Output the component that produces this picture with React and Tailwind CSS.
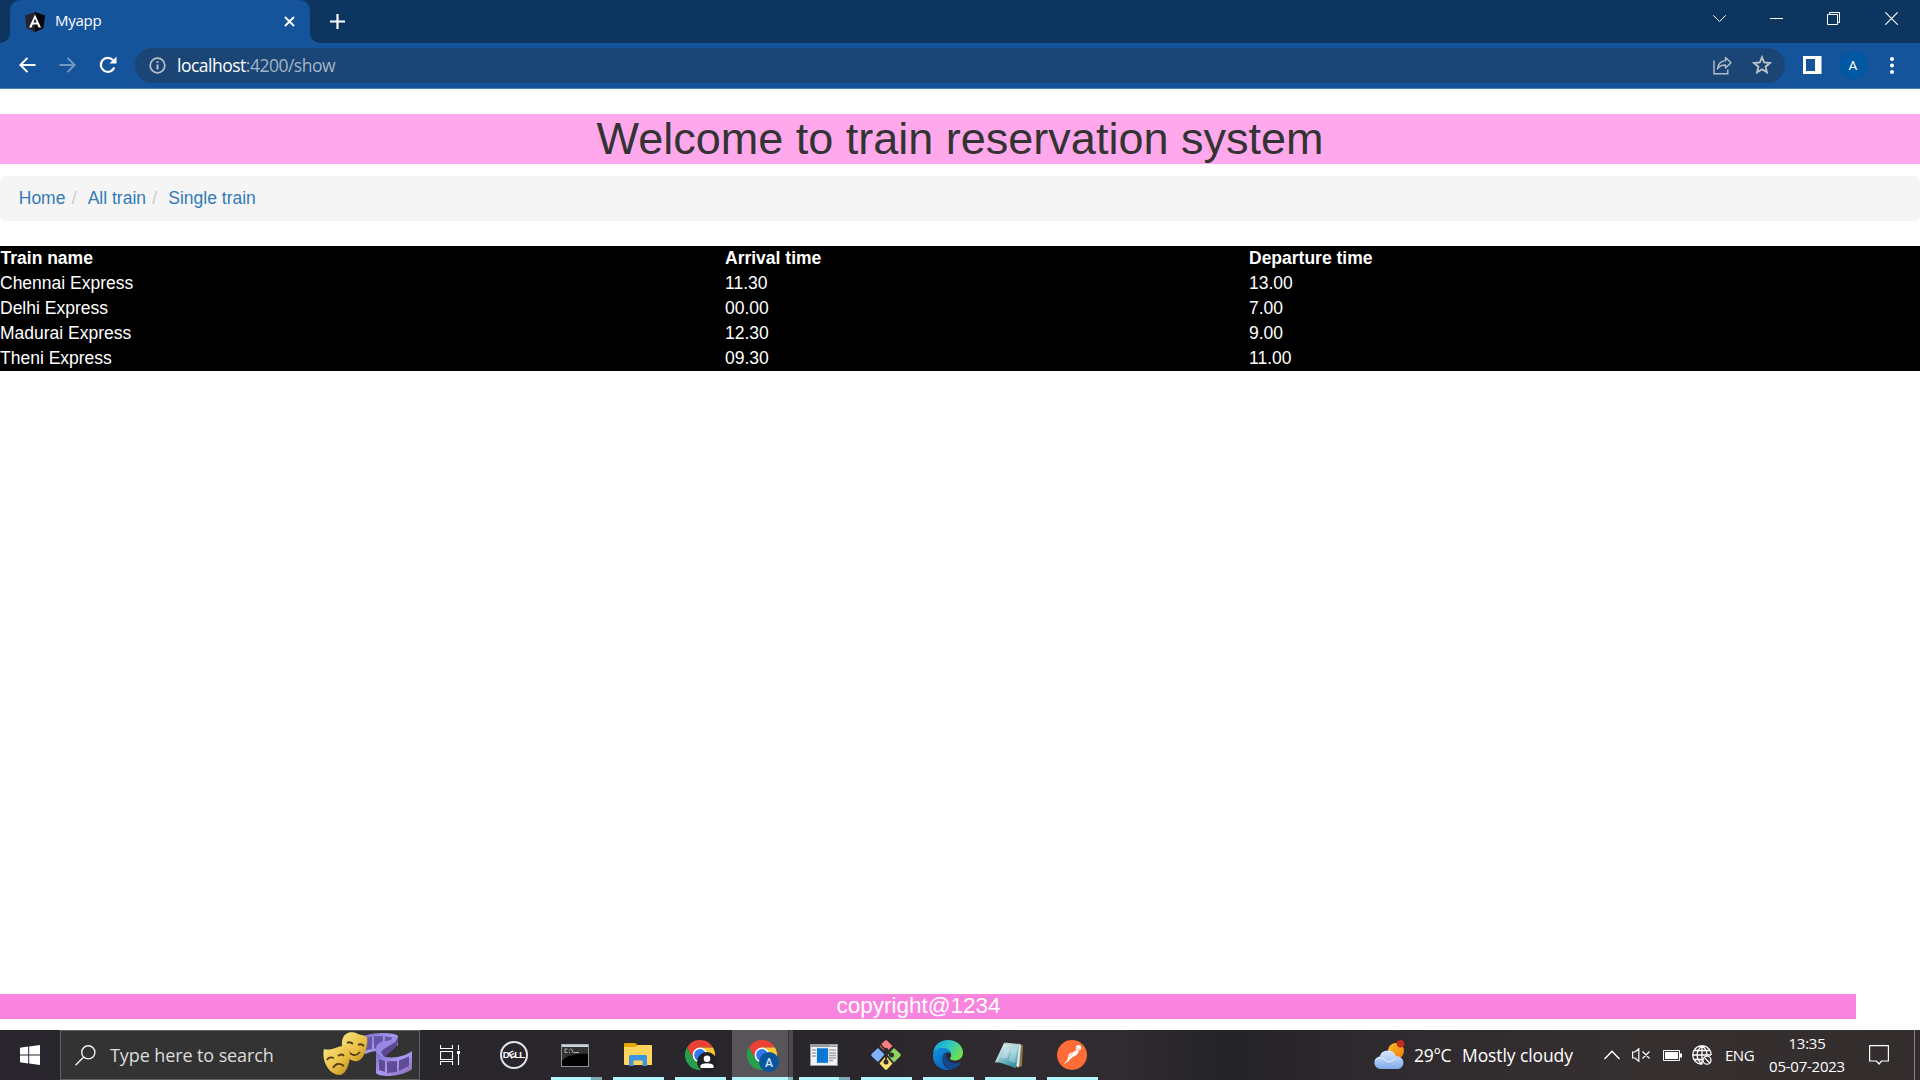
import React from "react";

const UI = "font-['Open_Sans','Noto_Sans',sans-serif]";

/* ---------- Browser icons ---------- */

const Angular = () => (
  <svg width="20" height="20" viewBox="0 0 20 20">
    <path d="M10 0 20 3.400 18.500 16 10 20 1.500 16 0 3.400Z" fill="#23252e" />
    <path d="M10 0 20 3.400 18.500 16 10 20Z" fill="#05070f" />
    <path
      d="M10 2.500 4 15.500H6.500L7.700 12.600H12.300L13.500 15.500H16ZM10 6.800 11.600 10.600H8.400Z"
      fill="#fff"
      fillRule="evenodd"
    />
  </svg>
);

const Reload = () => (
  <svg width="18" height="18" viewBox="0 0 18 18">
    <path d="M15.300 11.500A7 7 0 1 1 13.900 4" fill="none" stroke="#fff" strokeWidth="2.200" />
    <path d="M17.500 0.500V7.500H10.500Z" fill="#fff" />
  </svg>
);

const Share = () => (
  <svg width="19" height="19" viewBox="0 0 19 19" fill="none" stroke="#b5bfca" strokeWidth="1.400">
    <path d="M1 4.500V17.800H14.800V13.500" />
    <path d="M12.500 1.500 18 6.800 12.500 12V9C8.500 9 6 10.300 4.500 12.800 5 8.500 7.500 5 12.500 4.600Z" strokeLinejoin="round" />
  </svg>
);

const Star = () => (
  <svg width="20" height="20" viewBox="0 0 20 20">
    <path
      d="M10 2.200 12.200 7.500 17.900 8 13.600 11.700 14.900 17.300 10 14.300 5.100 17.300 6.400 11.700 2.100 8 7.800 7.500Z"
      fill="none"
      stroke="#c3c5c7"
      strokeWidth="1.800"
    />
  </svg>
);

function TabStrip() {
  return (
    <div className="flex h-[43px] bg-[#0c3560]">
      <div className="flex w-[10px] items-end">
        <svg width="10" height="10" viewBox="0 0 10 10">
          <path d="M10 0V10H0A10 10 0 0 0 10 0Z" fill="#15539a" />
        </svg>
      </div>
      <div className="flex h-[43px] w-[300px] items-center rounded-t-[10px] bg-[#15539a] pl-[15px] pr-[15px]">
        <Angular />
        <span className="mb-[3px] ml-[10px] flex-1 text-[15px] leading-[20px] tracking-[-0.25px] text-white">Myapp</span>
        <svg width="11" height="11" viewBox="0 0 11 11">
          <path d="M1 1 10 10M10 1 1 10" stroke="#fff" strokeWidth="1.900" />
        </svg>
      </div>
      <div className="flex w-[10px] items-end">
        <svg width="10" height="10" viewBox="0 0 10 10">
          <path d="M0 0V10H10A10 10 0 0 1 0 0Z" fill="#15539a" />
        </svg>
      </div>
      <svg width="15" height="15" viewBox="0 0 15 15" className="ml-[10px] mt-[14px]">
        <path d="M7.500 0V15M0 7.500H15" stroke="#fff" strokeWidth="2.200" />
      </svg>
      <div className="ml-auto flex pt-[12px]">
        <svg width="13" height="13" viewBox="0 0 13 13" fill="none" stroke="#fff" className="mr-[44px]">
          <path d="M0.300 3.300 6.500 9.500 12.700 3.300" />
        </svg>
        <svg width="13" height="13" viewBox="0 0 13 13" fill="none" stroke="#fff" className="mr-[44px]">
          <path d="M0 6.500H13" />
        </svg>
        <svg width="13" height="13" viewBox="0 0 13 13" fill="none" stroke="#fff" className="mr-[45px]">
          <path d="M0.500 2.500H10.500V12.500H0.500ZM2.500 2.500V0.500H12.500V10.500H10.500" />
        </svg>
        <svg width="13" height="13" viewBox="0 0 13 13" fill="none" stroke="#fff" className="mr-[22px]">
          <path d="M0.300 0.300 12.700 12.700M12.700 0.300 0.300 12.700" strokeWidth="1.100" />
        </svg>
      </div>
    </div>
  );
}

function Toolbar() {
  return (
    <div className="flex h-[46px] items-center border-b border-[#4a7eb9] bg-[#15539a] pb-[1px] pl-[19px]">
      <svg width="17" height="16" viewBox="0 0 17 16" fill="none" stroke="#fff" strokeWidth="2">
        <path d="M16.500 8H1.600M8.500 0.900 1.400 8 8.500 15.100" />
      </svg>
      <svg width="17" height="16" viewBox="0 0 17 16" fill="none" stroke="#7299c4" strokeWidth="2" className="ml-[23px]">
        <path d="M0.500 8H15.400M8.500 0.900 15.600 8 8.500 15.100" />
      </svg>
      <div className="ml-[23px]">
        <Reload />
      </div>
      <div className="ml-[18px] flex h-[35px] w-[1650px] items-center rounded-full bg-[#1a4575] pl-[14px] pr-[13px]">
        <svg width="17" height="17" viewBox="0 0 17 17" fill="none" stroke="#b9bfc6" strokeWidth="1.700">
          <circle cx="8.500" cy="8.500" r="7.300" />
          <path d="M8.500 7.500V12.500M8.500 4.300V6" strokeWidth="2" />
        </svg>
        <span className="ml-[11px] mb-[1px] flex-1 whitespace-nowrap text-[17.5px] leading-[24px] tracking-[-0.5px] text-white">
          localhost<span className="text-[#a3b5c8]">:4200/show</span>
        </span>
        <Share />
        <span className="ml-[20px]">
          <Star />
        </span>
      </div>
      <svg width="19" height="18" viewBox="0 0 19 18" className="ml-[18px]">
        <path d="M0 0H18.500V18H0ZM3 3V15H12V3Z" fill="#fff" fillRule="evenodd" />
      </svg>
      <div className="ml-[17px] flex h-[28px] w-[28px] items-center justify-center rounded-full bg-[#0058a3] font-['Roboto',sans-serif] text-[13.5px] text-white">
        A
      </div>
      <svg width="4" height="17" viewBox="0 0 4 17" className="ml-[23px]" fill="#fff">
        <circle cx="2" cy="2" r="2" />
        <circle cx="2" cy="8.500" r="2" />
        <circle cx="2" cy="15" r="2" />
      </svg>
    </div>
  );
}

/* ---------- Page ---------- */

const trains = [
  ["Chennai Express", "11.30", "13.00"],
  ["Delhi Express", "00.00", "7.00"],
  ["Madurai Express", "12.30", "9.00"],
  ["Theni Express", "09.30", "11.00"],
];

function Page() {
  return (
    <main className="flex flex-1 flex-col bg-white pt-[25px] font-['Liberation_Sans',Arial,sans-serif] text-[17.5px] leading-[25px]">
      <h1 className="h-[50px] bg-[#ffa8ec] text-center text-[45px] leading-[50px] text-[#333]">
        Welcome to train reservation system
      </h1>
      <ol className="mt-[12px] flex h-[45px] rounded-[5px] bg-[#f5f5f5] px-[18.75px] pt-[10px] text-[#337ab7]">
        <li>Home</li>
        <li>
          <span className="px-[6.25px] text-[#ccc]">/&nbsp;</span>All train
        </li>
        <li>
          <span className="px-[6.25px] text-[#ccc]">/&nbsp;</span>Single train
        </li>
      </ol>
      <table className="mt-[25px] w-full table-fixed border-collapse bg-black text-left text-white">
        <thead>
          <tr>
            <th className="w-[725px] p-0 pl-[0.5px]">Train name</th>
            <th className="w-[524px] p-0">Arrival time</th>
            <th className="p-0">Departure time</th>
          </tr>
        </thead>
        <tbody>
          {trains.map((row) => (
            <tr key={row[0]}>
              {row.map((cell) => (
                <td key={cell} className="p-0">
                  {cell}
                </td>
              ))}
            </tr>
          ))}
        </tbody>
      </table>
      <footer className="mb-[11px] mt-auto h-[25px] w-[1856px] bg-[#f984df] pr-[19px] text-center text-[22.5px] leading-[23px] text-white">
        copyright@1234
      </footer>
    </main>
  );
}

/* ---------- Taskbar icons ---------- */

const Masks = () => (
  <svg width="90" height="46" viewBox="0 0 90 46">
    <defs>
      <linearGradient id="gold" x1="0" y1="0" x2="1" y2="1">
        <stop offset="0" stopColor="#fbe488" />
        <stop offset="0.6" stopColor="#e8bd3f" />
        <stop offset="1" stopColor="#b98317" />
      </linearGradient>
      <linearGradient id="film" x1="0" y1="0" x2="1" y2="1">
        <stop offset="0" stopColor="#7a68c8" />
        <stop offset="0.5" stopColor="#a79af0" />
        <stop offset="1" stopColor="#8d66ae" />
      </linearGradient>
    </defs>
    <path d="M40 4C50 0 72 0 75 4V13C70 16 66 18 62 18 56 18 50 19 42 22Z" fill="url(#film)" />
    <path d="M42 6.500 49 4.500V17L42 18.500ZM51 4.200 60 4V15.500L51 16.700ZM62 4.200 70 5.500 61 15Z" fill="#6755a5" />
    <path d="M74 4C78 16 62 16 62 24 62 27 58 27 53.500 22 50 14 56 10 62 9 68 8 73 8 74 4Z" fill="#9788e2" />
    <path d="M74.500 6C74 12 62 14 58 20L62 26C64 20 76 18 75 6Z" fill="#5a4892" />
    <path d="M53 19C55 27 78 28 89 19V37C80 45 56 46 53 41Z" fill="url(#film)" />
    <path d="M56 27 62 29V40L56 38ZM64 29.500 74 29V40L64 41ZM76 28.500 86 24.500V34L76 39Z" fill="#5f4b96" />
    <path d="M20 6C22 0 30-1 35 2 40 4 46 2 44 12 43 22 38 31 31 29 23 28 16 14 20 6Z" fill="url(#gold)" />
    <path d="M24 11Q27 9 30 12M35 13Q38 11 41 14M24 18Q31 27 37 20" fill="none" stroke="#553d13" strokeWidth="1.800" />
    <path d="M1 17C10 20 17 11 24 15 29 18 27 32 23 38 20 44 15 44 10 41 2 36-1 25 1 17Z" fill="url(#gold)" />
    <path d="M4 28Q6 24 11 26M15 24Q19 21 21 24M10 36Q14 29 21 34" fill="none" stroke="#553d13" strokeWidth="1.800" />
  </svg>
);

const TaskView = () => (
  <svg width="20" height="20" viewBox="0 0 20 20" fill="none" stroke="#fff" className="mr-[4px]">
    <path d="M0.500 0V3.500H12.500V0M0.500 20V16.500H12.500V20M0.500 6.500H12.500V14.500H0.500ZM18.500 0V5M18.500 9V20" strokeWidth="1.100" />
    <path d="M17 6H20V9H17Z" fill="#fff" stroke="none" />
  </svg>
);

const Dell = () => (
  <div className="flex h-[28px] w-[28px] items-center justify-center rounded-full border-2 border-[#e4e4e6] pr-[1px] font-['Liberation_Sans',sans-serif] text-[9.500px] font-bold leading-none tracking-[-0.8px] text-white">
    D<span className="-rotate-[28deg]">E</span>LL
  </div>
);

const Terminal = () => (
  <svg width="28" height="23" viewBox="0 0 28 23" className="mr-[2px]">
    <path d="M0 0H28V23H0Z" fill="#8e979e" />
    <path d="M1 0.500H27V3H1Z" fill="#c9d3da" />
    <path d="M1 3H27V22H1Z" fill="#000" />
    <path d="M1 3H27V10C14 9 5 12 1 17Z" fill="#333" />
    <path d="M6.500 5H4V8.500H6.500M8.500 5.500V6.500M8.500 8V9M10 4.500 12.500 9M13 8.500H18" fill="none" stroke="#ccc" strokeWidth="0.800" />
  </svg>
);

const Explorer = () => (
  <svg width="28" height="24" viewBox="0 0 28 24" className="mr-[1px]">
    <path d="M0 1Q0 0 1 0H11Q12 0 13 1.500L14 3H20V8H0Z" fill="#e6a400" />
    <path d="M0 4H11L14 2H27Q28 2 28 3V21.500Q28 22 27 22H1Q0 22 0 21Z" fill="#ffd55c" />
    <path d="M5 23V13.500Q5 12 6.500 12H21.500Q23 12 23 13.500V23H18.500V17.500H9.500V23Z" fill="#3c95df" />
  </svg>
);

const Chrome = ({ letter }) => (
  <svg width="33" height="32" viewBox="0 0 33 32" className="ml-[3px] mt-[2px]">
    <path d="M2 7.500A15 15 0 0 1 28 7.500H15V15L8.500 18.700Z" fill="#ea4335" />
    <path d="M28 7.500A15 15 0 0 1 15 30L21.500 18.700 15 7.500Z" fill="#fcc934" />
    <path d="M2 7.500A15 15 0 0 0 15 30L21.500 18.700H8.500Z" fill="#28a04b" />
    <circle cx="15" cy="15" r="7.400" fill="#fff" />
    <circle cx="15" cy="15" r="5.900" fill="#2f79ee" />
    <circle cx="22" cy="22" r="10" fill={letter ? "#0a559b" : "#202124"} />
    {letter ? (
      <text x="22" y="26.500" textAnchor="middle" className="fill-[#cfe3f7] font-['Roboto',sans-serif] text-[12px] font-medium">
        {letter}
      </text>
    ) : (
      <g fill="#fff">
        <circle cx="22" cy="18.800" r="3.300" />
        <path d="M15.500 28V25.500C17 22.500 27 22.500 28.500 25.500V28Z" />
      </g>
    )}
  </svg>
);

const AppWindow = () => (
  <svg width="28" height="22" viewBox="0 0 28 22" className="mr-[1px]">
    <path d="M0 0H28V22H0Z" fill="#9a9a9a" />
    <path d="M1 3H27V21H1Z" fill="#f2f2f2" />
    <path d="M20 1.300H21.500M22.700 1.300H24.200M25.400 1.300H27" stroke="#e5e5e5" />
    <path d="M2 6H6M2 9H6M2 12H6M19 6H26M19 9H26M19 11.500H26M19 14H26M19 16.500H23" stroke="#a5a5a5" strokeWidth="1.300" />
    <path d="M6 3.500H18.500V19.500H6Z" fill="#d7e7f5" />
    <path d="M7 4.300H18V18.800H7Z" fill="#0878d4" />
  </svg>
);

const Git = () => (
  <svg width="30" height="30" viewBox="0 0 30 30">
    <path d="M14 .5Q15 0 16 .5L21.500 6 15 12.500 8.500 6Z" fill="#f97f80" />
    <path d="M7 8 13.500 14.500 7 22 .5 16Q0 15 .5 14Z" fill="#80b3ff" />
    <path d="M23 8 29.500 14Q30 15 29.500 16L23 22.500 16.500 15Z" fill="#8cd35f" />
    <path d="M15 16 21.500 23.500 16 29.500Q15 30 14 29.500L8.500 23.500Z" fill="#fde070" />
    <path d="M9 4 15 10.500V23M15 11 20.500 15.500" fill="none" stroke="#2e2a2e" strokeWidth="1.800" />
    <circle cx="15" cy="10" r="2.300" fill="#2e2a2e" />
    <circle cx="20.500" cy="15" r="2.500" fill="#2e2a2e" />
    <circle cx="15" cy="22" r="2.500" fill="#2e2a2e" />
  </svg>
);

const Edge = () => (
  <svg width="30" height="30" viewBox="0 0 30 30">
    <defs>
      <linearGradient id="edgeTop" x1="0" y1="0" x2="1" y2="0.5">
        <stop offset="0" stopColor="#169bd9" />
        <stop offset="0.5" stopColor="#2bc4c9" />
        <stop offset="1" stopColor="#6be04f" />
      </linearGradient>
      <linearGradient id="edgeLeft" x1="0" y1="0" x2="0.6" y2="1">
        <stop offset="0" stopColor="#1293dd" />
        <stop offset="1" stopColor="#0b63ba" />
      </linearGradient>
    </defs>
    <path d="M0.200 13C1 5 7 0 15 0 24 0 30 6 30 12.500 30 18 26 20.500 22 20.500 18.500 20.500 16.500 19 17 18 18.500 16.500 18.500 15 17.500 13 15 8 4 7 0.200 13Z" fill="url(#edgeTop)" />
    <path d="M0.100 14C2 9 6.500 7.500 10.500 8 16 8.500 18 12 18 14 18 12.500 12.500 11 10 16 8 21 12 29.500 18.500 29.500 10 32-1 26 0.100 14Z" fill="url(#edgeLeft)" />
    <path d="M13 12.300C9 14 9 19 11 23 13 27.500 17 29.800 18.500 29.500 22.500 28.700 26 26 28 22.700 28 22 27.500 22 27 22.300 20.500 25.500 11.500 21 13 12.300Z" fill="#14488f" />
  </svg>
);

const Notepad = () => (
  <svg width="28" height="28" viewBox="0 0 28 28" className="mr-[2px]">
    <defs>
      <linearGradient id="page" x1="0" y1="0" x2="0.4" y2="1">
        <stop offset="0" stopColor="#eefafb" />
        <stop offset="0.5" stopColor="#a4cfd6" />
        <stop offset="1" stopColor="#3b98a9" />
      </linearGradient>
    </defs>
    <path d="M21 3 28 4 27 25 22 27Z" fill="#8f7345" />
    <path d="M9 2 26 3.500 24 26 18 24Z" fill="#d8e9e9" />
    <path d="M9 2 24.500 3.500 21 27 6 22 0 21Z" fill="url(#page)" />
    <path d="M9 2 3 20 0 22 6 10Z" fill="#c7dbde" />
    <path d="M10 8H15L12 17H6ZM17 8H22L20 22 14 20Z" fill="#d9f3f6" opacity=".35" />
    <path d="M9 2.500 26 4" stroke="#c0c5c6" strokeWidth="2" strokeDasharray="1.500 1" />
  </svg>
);

const Postman = () => (
  <svg width="30" height="30" viewBox="0 0 30 30">
    <circle cx="15" cy="15" r="15" fill="#ff6c37" />
    <circle cx="21.500" cy="7.800" r="2.700" fill="#fff" />
    <path d="M19.500 10 22 11.500 19.500 15 15 17.500 11.500 21 6.500 24.500 11 19 10.500 18.500 12 14Z" fill="#fff" />
    <path d="M14 13.500 18 11M19 7.500 23 9.500M12 17 15.500 14" stroke="#ff8c62" strokeWidth="0.700" />
  </svg>
);

const WeatherIcon = () => (
  <svg width="31" height="30" viewBox="0 0 31 30">
    <defs>
      <linearGradient id="cloud" x1="0" y1="0" x2="0" y2="1">
        <stop offset="0" stopColor="#dbe9fd" />
        <stop offset="0.55" stopColor="#a9c8f6" />
        <stop offset="1" stopColor="#7ea9e8" />
      </linearGradient>
      <linearGradient id="sun" x1="0" y1="0" x2="1" y2="1">
        <stop offset="0" stopColor="#fbc02d" />
        <stop offset="1" stopColor="#f2760c" />
      </linearGradient>
    </defs>
    <circle cx="22" cy="11" r="8" fill="url(#sun)" />
    <path d="M6.500 29A6.300 6.300 0 0 1 5.500 16.500 8.700 8.700 0 0 1 22 16.300 6.400 6.400 0 0 1 24 29Z" fill="url(#cloud)" />
    <path d="M1.500 20Q7 16 11 20T22 18.500" fill="none" stroke="#e2edfd" strokeWidth="1.500" opacity=".7" />
    <circle cx="26.500" cy="3.800" r="3.800" fill="#c42b1c" />
  </svg>
);

const apps = [
  { id: "taskview", icon: <TaskView /> },
  { id: "dell", icon: <Dell /> },
  { id: "terminal", icon: <Terminal />, bar: "split" },
  { id: "explorer", icon: <Explorer />, bar: "full" },
  { id: "chrome", icon: <Chrome />, bar: "full" },
  { id: "chrome-a", icon: <Chrome letter="A" />, bar: "active" },
  { id: "window", icon: <AppWindow />, bar: "split" },
  { id: "git", icon: <Git />, bar: "full" },
  { id: "edge", icon: <Edge />, bar: "full" },
  { id: "notepad", icon: <Notepad />, bar: "full" },
  { id: "postman", icon: <Postman />, bar: "full" },
];

function Bar({ kind }) {
  if (!kind) return <div className="h-[3px]" />;
  if (kind === "full") return <div className="h-[3px] w-[51px] bg-[#b2f5ff]" />;
  if (kind === "active")
    return (
      <div className="flex h-[3px] w-[61px]">
        <div className="w-[56px] bg-[#b2f5ff]" />
        <div className="flex-1 bg-[#86b6bc]" />
      </div>
    );
  return (
    <div className="flex h-[3px] w-[51px]">
      <div className="w-[40px] bg-[#b2f5ff]" />
      <div className="flex-1 bg-[#7fabb0]" />
    </div>
  );
}

function AppButton({ icon, bar }) {
  return (
    <div
      className={
        bar === "active"
          ? "flex w-[62px] flex-col items-start bg-[linear-gradient(90deg,transparent_0_1px,#57555a_1px_57px,#333136_57px_58px,#4a484d_58px)]"
          : "flex w-[62px] flex-col items-center"
      }
    >
      <div className="flex h-[47px] w-full items-center justify-center pt-[3px]">{icon}</div>
      <div className={bar === "active" ? "ml-[1px]" : ""}>
        <Bar kind={bar} />
      </div>
    </div>
  );
}

function Taskbar() {
  return (
    <div className="flex h-[50px] bg-[linear-gradient(90deg,#29252d_0%,#29262c_45%,#302b2f_53%,#302c30_58%,#242327_64%,#2f2a2e_72%,#352f30_85%,#332d2d_100%)] text-white">
      <div className="flex w-[60px] items-center pl-[20px]">
        <svg width="20" height="20" viewBox="0 0 20 20" fill="#fff">
          <path d="M0 2.700 8.200 1.600V9.500H0ZM9.200 1.400 20 0V9.500H9.200ZM0 10.500H8.200V18.400L0 17.300ZM9.200 10.500H20V20L9.200 18.600Z" />
        </svg>
      </div>
      <div className="flex w-[360px] items-center border border-[#606060] bg-[#333]">
        <svg width="21" height="21" viewBox="0 0 21 21" fill="none" stroke="#f2f2f2" strokeWidth="1.400" className="ml-[14px]">
          <circle cx="13.300" cy="7.300" r="6.600" />
          <path d="M8.500 12.200 0.500 20.200" />
        </svg>
        <span className="ml-[14px] w-[213px] whitespace-nowrap text-[18px] leading-[24px] tracking-[-0.1px] text-[#dcdcdc]">
          Type here to search
        </span>
        <Masks />
      </div>
      <div className="flex">
        <div className="w-[1px]" />
        {apps.map((app) => (
          <AppButton key={app.id} icon={app.icon} bar={app.bar} />
        ))}
      </div>
      <div className="ml-auto flex items-center">
        <WeatherIcon />
        <span className="ml-[9px] w-[48px] whitespace-nowrap text-[17.5px] tracking-[-0.3px]">29°C</span>
        <span className="w-[142px] whitespace-nowrap text-[17.5px] tracking-[-0.1px]">Mostly cloudy</span>
        <svg width="16" height="10" viewBox="0 0 16 10" fill="none" stroke="#fff" strokeWidth="1.400">
          <path d="M0.500 9 8 1.300 15.500 9" />
        </svg>
        <svg width="19" height="14" viewBox="0 0 19 14" fill="none" stroke="#fff" strokeWidth="1.200" className="ml-[12px]">
          <path d="M0.600 4H3L6.800 0.700V13.300L3 10H0.600ZM10.500 3.500 17.500 10.500M17.500 3.500 10.500 10.500" />
        </svg>
        <svg width="19" height="12" viewBox="0 0 19 12" className="ml-[12px] mt-[1px]">
          <path d="M0.500 0.500H16.500V10.500H0.500Z" fill="none" stroke="#fff" />
          <path d="M2 2H15V9H2ZM17 3.500H19V7.500H17Z" fill="#fff" />
        </svg>
        <svg width="20" height="20" viewBox="0 0 20 20" fill="none" stroke="#fff" strokeWidth="1.300" className="ml-[10px]">
          <path d="M10 19.300A9.300 9.300 0 1 1 19.300 10M10 19.300C3.500 14 3.500 6 10 0.700 14.500 4 15 8 15 10M2 5.500H18M1 10H19M2 14.500H10M10 0.700V19.300" />
          <circle cx="15" cy="15.200" r="4" />
          <path d="M12.200 12.400 17.800 18" />
        </svg>
        <span className="ml-[13px] w-[44px] text-[15px] tracking-[-0.5px]">ENG</span>
        <div className="mr-[1px] flex w-[76px] flex-col items-center whitespace-nowrap text-[15px] leading-[23px] tracking-[-0.25px]">
          <span>13:35</span>
          <span>05-07-2023</span>
        </div>
        <svg width="20" height="20" viewBox="0 0 20 20" fill="none" stroke="#fff" strokeWidth="1.200" className="ml-[23px]">
          <path d="M0.600 0.600H19.400V16H12.500L10 19 7.500 16H0.600Z" />
        </svg>
        <div className="ml-[25px] h-[50px] w-[6px] border-l border-[#878384]" />
      </div>
    </div>
  );
}

export default function App() {
  return (
    <div className={`flex h-[1080px] w-[1920px] flex-col overflow-hidden bg-white ${UI}`}>
      <TabStrip />
      <Toolbar />
      <Page />
      <Taskbar />
    </div>
  );
}
